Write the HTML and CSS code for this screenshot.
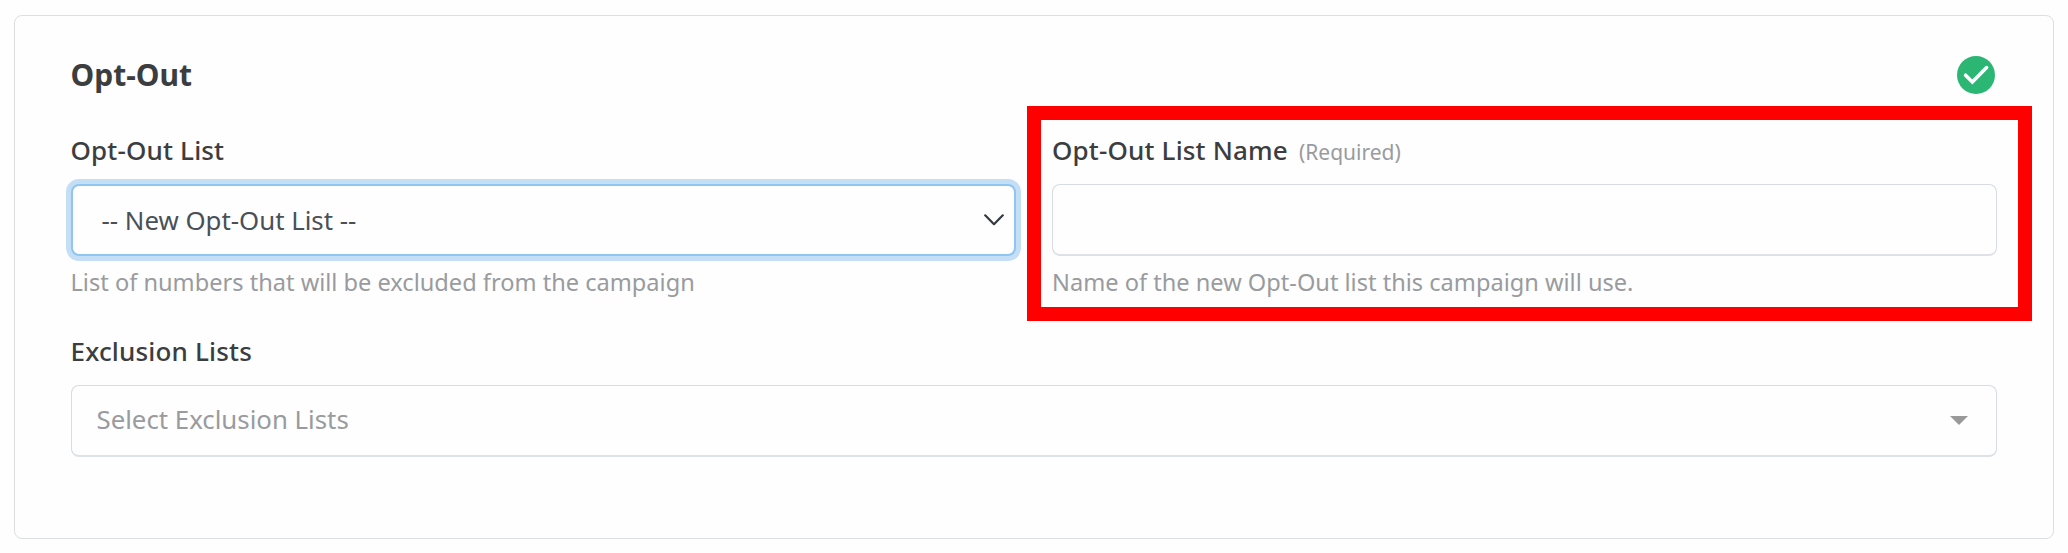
FILE: index.html
```html
<!DOCTYPE html>
<html lang="en">
<head>
<meta charset="utf-8">
<title>Opt-Out</title>
<link rel="stylesheet" href="styles.css">
</head>
<body>
<section class="card">
  <header class="card-header">
    <h2 class="title">Opt-Out</h2>
    <svg class="status" width="38" height="38" viewBox="0 0 38 38"><circle cx="19" cy="19" r="19" fill="#2bb673"/><path d="M8.6 19.2 15.4 26 29.6 11.6" fill="none" stroke="#fff" stroke-width="3.6" stroke-linecap="round"/></svg>
  </header>
  <div class="row">
    <div class="field">
      <div class="label">Opt-Out List</div>
      <div class="control select focused">
        <span class="value">-- New Opt-Out List --</span>
        <svg class="chevron" width="20" height="12" viewBox="0 0 20 12"><path d="M1.2 1.3 10 10.2 18.8 1.3" fill="none" stroke="#343a40" stroke-width="2.2" stroke-linecap="round" stroke-linejoin="round"/></svg>
      </div>
      <div class="help">List of numbers that will be excluded from the campaign</div>
    </div>
    <div class="field highlighted">
      <div class="label">Opt-Out List Name<span class="required">(Required)</span></div>
      <div class="control"></div>
      <div class="help">Name of the new Opt-Out list this campaign will use.</div>
    </div>
  </div>
  <div class="field">
    <div class="label">Exclusion Lists</div>
    <div class="control multi">
      <span class="placeholder">Select Exclusion Lists</span>
      <svg class="caret" width="18" height="9" viewBox="0 0 18 9"><path d="M0 0H18L9 9Z" fill="#999"/></svg>
    </div>
  </div>
</section>
</body>
</html>
```
FILE: styles.css
```css
*,
*::after { box-sizing: border-box; }
body {
  margin: 0;
  padding: 15px 14px 14px;
  height: 553px;
  background: #fefefe;
  color: #3c3d3f;
  font-family: "Noto Sans", "Open Sans", sans-serif;
}
.card {
  height: 524px;
  padding: 40px 56px 0 55.5px;
  border: 1px solid #dcdee0;
  border-radius: 8px;
  background: #fefefe;
}
.card-header {
  display: flex;
  justify-content: space-between;
  height: 38px;
  padding-right: 2.5px;
}
.title {
  margin: 0;
  font-size: 30px;
  font-weight: 700;
  line-height: 38px;
}
.row {
  display: grid;
  grid-template-columns: 945.5px 945px;
  gap: 36px;
  margin-top: 38px;
  height: 201px;
}
.field { position: relative; }
.label {
  display: flex;
  height: 52px;
  font-size: 26px;
  font-weight: 500;
  line-height: 36px;
  letter-spacing: .17px;
}
.required {
  margin-left: 11px;
  color: #999b9e;
  font-size: 21px;
  font-weight: 400;
  line-height: 40px;
  letter-spacing: 0;
}
.control {
  display: flex;
  align-items: center;
  justify-content: space-between;
  height: 72px;
  border: 1px solid #d6dce2;
  border-bottom: 2px solid #dee2e6;
  border-radius: 8px;
  background: #fefefe;
  font-size: 25.8px;
}
.select { padding: 0 10px 0 29px; color: #495057; }
.focused {
  border: 2px solid #8ec5f1;
  box-shadow: 0 0 0 5px #c4dff5;
}
.multi {
  padding: 0 28px 3px 25px;
  color: #999b9e;
}
.caret { margin-top: 2px; }
.help {
  margin-top: 8px;
  color: #999b9e;
  font-size: 23.6px;
  line-height: 36px;
}
.highlighted::after {
  content: "";
  position: absolute;
  left: -25px;
  top: -26px;
  width: 1005px;
  height: 215px;
  border: 14px solid #f00;
}
```
